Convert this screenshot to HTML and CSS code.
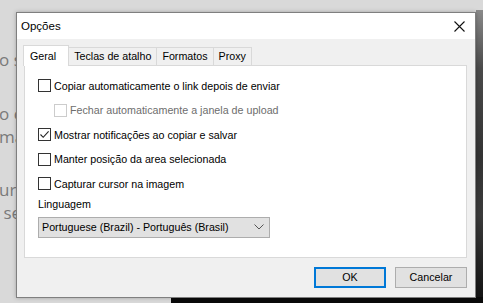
FILE: index.html
```html
<!DOCTYPE html>
<html lang="pt-BR">
<head>
<meta charset="utf-8">
<link rel="stylesheet" href="styles.css">
</head>
<body>
<div class="desktop">
  <div class="bg-text">
    <div class="l1">o s</div>
    <div class="l2">o c</div>
    <div class="l3">ma</div>
    <div class="l4">ura</div>
    <div class="l5">&nbsp;se</div>
  </div>
  <div class="dark-right"></div>
  <div class="dark-bottom"></div>

  <div class="dialog">
    <div class="titlebar">
      <span class="title">Opções</span>
      <svg class="close" width="11" height="11" viewBox="0 0 11 11"><path d="M0.5 0.5 L10.5 10.5 M10.5 0.5 L0.5 10.5" stroke="#111" stroke-width="1.1" fill="none"/></svg>
    </div>
    <div class="body">
      <div class="tabs">
        <div class="tab active">Geral</div>
        <div class="tab">Teclas de atalho</div>
        <div class="tab">Formatos</div>
        <div class="tab">Proxy</div>
      </div>
      <div class="panel">
        <div class="check"><span class="box"></span><span>Copiar automaticamente o link depois de enviar</span></div>
        <div class="check sub disabled"><span class="box"></span><span>Fechar automaticamente a janela de upload</span></div>
        <div class="check"><span class="box"><svg width="11" height="11" viewBox="0 0 11 11"><path d="M1.5 5.5 L4.2 8.3 L9.6 2.4" stroke="#222" stroke-width="1.1" fill="none"/></svg></span><span>Mostrar notificações ao copiar e salvar</span></div>
        <div class="check"><span class="box"></span><span>Manter posição da area selecionada</span></div>
        <div class="check"><span class="box"></span><span>Capturar cursor na imagem</span></div>
        <div class="label">Linguagem</div>
        <div class="select"><span>Portuguese (Brazil) - Português (Brasil)</span><svg width="10" height="6" viewBox="0 0 10 6"><path d="M0.5 0.5 L5 5 L9.5 0.5" stroke="#555" stroke-width="1" fill="none"/></svg></div>
      </div>
      <div class="buttons">
        <div class="btn default">OK</div>
        <div class="btn">Cancelar</div>
      </div>
    </div>
  </div>
</div>
</body>
</html>
```
FILE: styles.css
```css
html, body {
  margin: 0;
  padding: 0;
}
body {
  width: 483px;
  height: 303px;
  overflow: hidden;
  font-family: "Liberation Sans", Arial, sans-serif;
  font-size: 10.7px;
  color: #000;
}
.desktop {
  position: relative;
  width: 483px;
  height: 303px;
  background: #d9d9d9;
  overflow: hidden;
}
.bg-text {
  position: absolute;
  left: -1px;
  top: 0;
  font-family: "Open Sans", "Noto Sans", sans-serif;
  font-size: 17px;
  color: #7a7a7a;
  line-height: 14px;
}
.bg-text div { position: absolute; left: 0; white-space: nowrap; }
.bg-text .l1 { top: 53px; }
.bg-text .l2 { top: 107px; }
.bg-text .l3 { top: 130px; }
.bg-text .l4 { top: 183px; }
.bg-text .l5 { top: 206px; }
.dark-right {
  position: absolute;
  left: 476px;
  top: 10px;
  width: 7px;
  height: 293px;
  background: linear-gradient(#8a8a8a, #4a4a4a 20%, #333 50%, #3a3a3a 70%, #111);
}
.dark-bottom {
  position: absolute;
  left: 171px;
  top: 297px;
  width: 312px;
  height: 6px;
  background: #0a0a0a;
}
.dialog {
  position: absolute;
  left: 16px;
  top: 12px;
  width: 460px;
  height: 286px;
  box-sizing: border-box;
  border: 1px solid #7f7f7f;
  background: #f0f0f0;
  display: flex;
  flex-direction: column;
  box-shadow: 0 0 4px rgba(0,0,0,0.25);
}
.titlebar {
  flex: none;
  height: 26px;
  background: #fff;
  display: flex;
  align-items: center;
  justify-content: space-between;
  padding: 0 10px 0 4px;
}
.title {
  font-size: 11.5px;
}
.body {
  flex: 1;
  display: flex;
  flex-direction: column;
  padding: 6px 8px 0 6px;
}
.tabs {
  flex: none;
  display: flex;
  align-items: flex-end;
  height: 20px;
  position: relative;
  z-index: 1;
}
.tab {
  height: 17px;
  line-height: 17px;
  padding: 0 5px;
  border: 1px solid #d9d9d9;
  border-bottom: none;
  border-left: none;
  background: #f0f0f0;
  white-space: nowrap;
}
.tab.active {
  height: 20px;
  margin-bottom: -1px;
  background: #fff;
  border-left: 1px solid #d9d9d9;
  padding: 0 12px 0 6px;
  line-height: 21px;
}
.panel {
  flex: none;
  box-sizing: border-box;
  height: 193px;
  background: #fff;
  border: 1px solid #d9d9d9;
  padding: 13px 0 0 13px;
  display: flex;
  flex-direction: column;
  margin-left: 1px;
}
.check {
  display: flex;
  align-items: center;
  height: 13px;
  margin-bottom: 11.5px;
  white-space: nowrap;
}
.check.sub { padding-left: 16px; }
.check.disabled { color: #6d6d6d; }
.box {
  width: 11px;
  height: 11px;
  border: 1px solid #333;
  background: #fff;
  margin-right: 3px;
  display: flex;
  align-items: center;
  justify-content: center;
  flex: none;
}
.disabled .box { border-color: #cccccc; }
.label {
  margin-top: -5px;
  height: 14px;
  line-height: 14px;
}
.select {
  margin-top: 6px;
  width: 222px;
  height: 19px;
  border: 1px solid #adadad;
  background: #e1e1e1;
  display: flex;
  align-items: center;
  justify-content: space-between;
  padding: 0 5px 0 3px;
  white-space: nowrap;
}
.buttons {
  flex: none;
  display: flex;
  justify-content: flex-end;
  gap: 9px;
  margin-top: 9px;
}
.btn {
  width: 70px;
  height: 19px;
  border: 1px solid #adadad;
  background: #e1e1e1;
  text-align: center;
  line-height: 19px;
}
.btn.default {
  width: 68px;
  height: 17px;
  border: 2px solid #0078d7;
  line-height: 17px;
}
```
